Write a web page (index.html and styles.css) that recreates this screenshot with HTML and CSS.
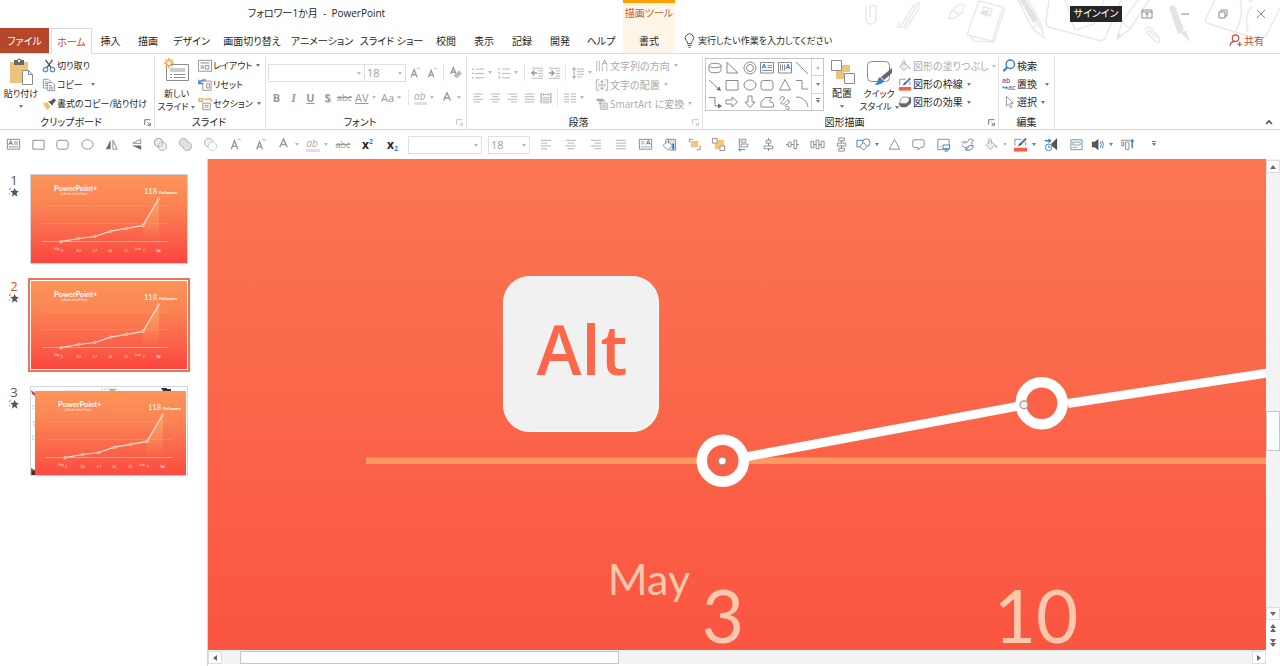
FILE: index.html
```html
<!DOCTYPE html>
<html lang="ja">
<head>
<meta charset="utf-8">
<title>フォロワー1か月 - PowerPoint</title>
<link rel="stylesheet" href="styles.css">
</head>
<body>
<svg class="sprite" aria-hidden="true">
  <defs>
    <linearGradient id="slideFill" x1="0" y1="0" x2="0" y2="1"><stop offset="0" stop-color="#fd9459"/><stop offset=".3" stop-color="#fb8654"/><stop offset=".75" stop-color="#fa5f48"/><stop offset="1" stop-color="#fa453e"/></linearGradient>
    <linearGradient id="areaFill" x1="0" y1="0" x2="0" y2="1"><stop offset="0" stop-color="#fdb66c" stop-opacity=".8"/><stop offset="1" stop-color="#fdb66c" stop-opacity="0"/></linearGradient>
  </defs>
  <symbol id="textbox" viewBox="0 0 16 16"><path class="ln" d="M1.5 2.500h13v10.500h-13zM8.500 5.500h4.500M8.500 7.500h4.500M3 10.500h10"/><path class="bl" d="M3 8.500l2-4.500 2 4.500M4 7h2.500"/></symbol>
  <symbol id="vtextbox" viewBox="0 0 16 16"><path class="ln" d="M1.500 2.500h13v10.500h-13zM3.500 4.500v6M5.500 4.500v6M7.500 4.500v6"/><path class="bl" d="M9 9l2-5 2 5M9.700 7.500h2.600"/></symbol>
  <symbol id="phbox" viewBox="0 0 16 16"><path class="ln" d="M1.500 2.500h13v10.500h-13z"/><path fill="#ccc" d="M3 4h4v4H3zM3 9.500h10v2H3z"/><path class="bl" d="M9 8l2-4.500L13 8M9.500 6.700h3"/></symbol>
  <symbol id="rect" viewBox="0 0 16 16"><path class="ln" d="M2 3.500h12v9.500H2z"/></symbol>
  <symbol id="rrect" viewBox="0 0 16 16"><rect class="ln" x="2" y="3.500" width="12" height="9.500" rx="2.500"/></symbol>
  <symbol id="oval" viewBox="0 0 16 16"><ellipse class="ln" cx="8" cy="8" rx="6" ry="5"/></symbol>
  <symbol id="tri" viewBox="0 0 16 16"><path class="ln" d="M8 2.500L13.500 13h-11z"/></symbol>
  <symbol id="cyl" viewBox="0 0 16 16"><path class="ln" d="M2 5.500v5c0 3 12 3 12 0v-5"/><ellipse class="ln" cx="8" cy="5.500" rx="6" ry="2.200"/></symbol>
  <symbol id="rtri" viewBox="0 0 16 16"><path class="ln" d="M3 2.500V13h11z"/></symbol>
  <symbol id="donut" viewBox="0 0 16 16"><circle class="ln" cx="8" cy="8" r="6"/><circle class="ln" cx="8" cy="8" r="3.500"/></symbol>
  <symbol id="line" viewBox="0 0 16 16"><path class="ln" d="M2 2l12 12"/></symbol>
  <symbol id="arrow" viewBox="0 0 16 16"><path class="ln" d="M2 3l11 10"/><path class="dk" d="M14 14l-4.500-1.200 3-3.200z"/></symbol>
  <symbol id="elbow" viewBox="0 0 16 16"><path class="ln" d="M2 3.500h6V12h6"/></symbol>
  <symbol id="elbowarrow" viewBox="0 0 16 16"><path class="ln" d="M2 3.500h6V12h4"/><path class="dk" d="M11 9.500l4 2.500-4 2.500z"/></symbol>
  <symbol id="rarrow" viewBox="0 0 16 16"><path class="ln" d="M2 6h6V3l5.500 5L8 13v-3H2z"/></symbol>
  <symbol id="darrow" viewBox="0 0 16 16"><path class="ln" d="M6 2v6H3l5 5.500L13 8h-3V2z"/></symbol>
  <symbol id="poly" viewBox="0 0 16 16"><path class="ln" d="M6 3.500h7q-4 4-1 5 3-1 2.500 4.500H2V8z"/></symbol>
  <symbol id="scribble" viewBox="0 0 16 16"><path class="ln" d="M3 6c0-5 6-4 4-1s-5 4-2 5 6-7 7-3-5 3-4 5 4-1 4 2-3 1-3 0"/></symbol>
  <symbol id="arc" viewBox="0 0 16 16"><path class="ln" d="M2 3c7 0 11 4 12 10"/></symbol>
  <symbol id="fliph" viewBox="0 0 16 16"><path class="dk" d="M7 3v10H2z"/><path class="ln" d="M9.500 3.500v9.500h4.500z"/></symbol>
  <symbol id="flipv" viewBox="0 0 16 16"><path class="ln" d="M12.500 7L4 6.500l8.500-4z"/><path class="dk" d="M3 9h10v4.500z"/></symbol>
  <symbol id="union" viewBox="0 0 16 16"><circle class="gr" fill="#f1ebef" cx="6" cy="6" r="4.500"/><circle class="gr" fill="#f1ebef" cx="10" cy="10" r="4.500"/><circle class="gr" cx="6" cy="6" r="4.500"/></symbol>
  <symbol id="merge" viewBox="0 0 16 16"><path class="gr" fill="#e6dde3" d="M6 1.500a4.500 4.500 0 0 1 4.500 4 4.500 4.500 0 1 1-5 5A4.500 4.500 0 0 1 6 1.500z"/></symbol>
  <symbol id="subtract" viewBox="0 0 16 16"><circle class="gr" fill="#f4eff2" cx="6" cy="6" r="4.500"/><circle class="gr" cx="10" cy="10" r="4.500" fill="#fff" stroke-dasharray="1.500 1"/></symbol>
  <symbol id="grow" viewBox="0 0 16 16"><path class="gd w2" d="M3.500 13L7 4l3.500 9M4.800 10h4.400"/><path class="gd" d="M10.500 3.500L12 2l1.500 1.500"/></symbol>
  <symbol id="shrink" viewBox="0 0 16 16"><path class="gd w2" d="M4 13l3-8 3 8M5 10.500h4"/><path class="gd" d="M10.500 2L12 3.500 13.500 2"/></symbol>
  <symbol id="fontcolor" viewBox="0 0 16 16"><path class="gd w2" d="M4 11L8 2l4 9M5.500 8h5"/></symbol>
  <symbol id="clear" viewBox="0 0 16 16"><path class="gd w2" d="M2 9l3-7 3 7M3 7h4"/><path fill="#bbb" d="M11.500 5l3.500 3.500-6 5.500L5 11z"/></symbol>
  <symbol id="bullets" viewBox="0 0 16 16"><path class="gr" d="M5 3.500h10M5 8.500h10M5 13.500h10"/><path class="gr w2" d="M1 3.500h2M1 8.500h2M1 13.500h2"/></symbol>
  <symbol id="numbers" viewBox="0 0 16 16"><path class="gr" d="M6 3.500h9M6 8.500h9M6 13.500h9M1.500 2.500h1V5M1.500 7.500h1.500V10M1.500 12.500h1.500V15"/></symbol>
  <symbol id="outdent" viewBox="0 0 16 16"><path class="gr" d="M2 2.500h13M9 5.500h6M9 8.500h6M9 11.500h6M2 14h13"/><path class="gd w2" d="M2 8h6M5 5L2 8l3 3"/></symbol>
  <symbol id="indent" viewBox="0 0 16 16"><path class="gr" d="M2 2.500h13M10 5.500h5M10 8.500h5M10 11.500h5M2 14h13"/><path class="gd w2" d="M2 8h6M5 5l3 3-3 3"/></symbol>
  <symbol id="spacing" viewBox="0 0 16 16"><path class="gr" d="M7 3.500h8M7 6.500h8M7 9.500h8M7 12.500h6"/><path class="gd" d="M3.500 2v12M1.500 4.500l2-2.500 2 2.500M1.500 11.500l2 2.500 2-2.500"/></symbol>
  <symbol id="left" viewBox="0 0 16 16"><path class="gr" d="M3 3.500h11M3 6.500h7M3 9.500h11M3 12.500h7"/></symbol>
  <symbol id="center" viewBox="0 0 16 16"><path class="gr" d="M3 3.500h11M5 6.500h7M3 9.500h11M5 12.500h7"/></symbol>
  <symbol id="right" viewBox="0 0 16 16"><path class="gr" d="M3 3.500h11M7 6.500h7M3 9.500h11M7 12.500h7"/></symbol>
  <symbol id="justify" viewBox="0 0 16 16"><path class="gr" d="M3 3.500h11M3 6.500h11M3 9.500h11M3 12.500h11"/></symbol>
  <symbol id="distribute" viewBox="0 0 16 16"><path class="gr w2" d="M2.500 2v12M13.500 2v12"/><path class="gr" d="M4 4h8M6 2.500L4 4l2 1.500M10 2.500L12 4l-2 1.500M4 7.500h8M4 9.500h8M4 11.500h8M4 13.500h8"/></symbol>
  <symbol id="columns" viewBox="0 0 16 16"><path class="gr" d="M1 3.500h6M9 3.500h6M1 6.500h6M9 6.500h6M1 9.500h6M9 9.500h6M1 12.500h6M9 12.500h6"/></symbol>
  <symbol id="direction" viewBox="0 0 16 16"><path class="gr" d="M2 2v12M5 2v12M8.500 8v6M13.500 8v6"/><path class="gd" d="M8 7l3-6 3 6M9.500 5h3"/></symbol>
  <symbol id="valign" viewBox="0 0 16 16"><path class="gr" fill="#f7f1f5" d="M5 2H1.500v12H5M11 2h3.500v12H11"/><path class="gd" d="M8 3v4M6 5l2-2 2 2M8 9v4M6 11l2 2 2-2M4 8h8"/></symbol>
  <symbol id="smartart" viewBox="0 0 16 16"><path fill="#aaa" d="M1 2h8l3 3H6l2 3H4l2-3H3z"/><path class="gr" fill="#efe5ec" d="M6 7h8v7H6zM8 9.500h4M8 11.500h4"/></symbol>
  <symbol id="fill" viewBox="0 0 16 16"><path class="gr" fill="#f1eaee" d="M7 4l5 4.500-5 5-5-5z"/><path class="gr" d="M5 7V2.500q2-2 3 0V7"/><path fill="#bba9b6" d="M12 8q3 2 1.500 4-2-1-1.500-4z"/></symbol>
  <symbol id="outline" viewBox="0 0 16 16"><path class="ln" d="M9 2.500H2V9M13.500 5v4"/><path stroke="#3d7fc1" stroke-width="2.200" d="M14 1.500L7 8.500"/><path fill="#444" d="M7.500 6.500L5 10l4-2z"/><path fill="#fb5a42" d="M1 11.500h14v4H1z"/></symbol>
  <symbol id="effects" viewBox="0 0 16 16"><path fill="#666" d="M13 2l2 1v5q0 2-2 3l-4 3H4l-3-3V9l7 1 3-2z"/><path class="ln" fill="#fff" d="M6 2.500h5q2 0 2 2l-1 3q-1 2-3 2H4q-3 0-2-2l1.500-3Q4.500 2.500 6 2.500z"/></symbol>
  <symbol id="search" viewBox="0 0 16 16"><circle cx="9.500" cy="6" r="4.800" fill="none" stroke="#3d7fc1" stroke-width="1.600"/><path stroke="#3d7fc1" stroke-width="2.500" d="M6 9.500L1.500 14"/></symbol>
  <symbol id="cursor" viewBox="0 0 16 16"><path class="ln" fill="#fff" d="M5 1.500v11l2.500-2 2 4 2-1-2-4H13z"/></symbol>
  <symbol id="cut" viewBox="0 0 16 16"><path stroke="#555" stroke-width="1.600" d="M4 1l6.500 9M12 1L5.500 10"/><g fill="none" stroke="#5b93cd" stroke-width="1.500"><circle cx="4" cy="12" r="2.500"/><circle cx="12" cy="12" r="2.500"/></g></symbol>
  <symbol id="copy" viewBox="0 0 16 16"><path class="ln" fill="#fff" d="M1.500 1.500h6l2 2v8h-8z"/><path class="ln" fill="#fff" d="M6.500 5h5l3 3v6.500h-8z"/><path stroke="#5b93cd" d="M3 4.500h3M3 6.500h3M3 8.500h3M8 8.500h3M8 10.500h5M8 12.500h5"/></symbol>
  <symbol id="painter" viewBox="0 0 16 16"><path fill="#eec274" d="M1 7l5-1 4 5-4 4z"/><path fill="#555" d="M7 5l5 5 1-3 3-3-2.500-2.500L11 4z"/></symbol>
  <symbol id="layout" viewBox="0 0 16 16"><path class="ln" d="M.5 1.500h15v12.500H.5z"/><path fill="#bbb" d="M3 3.500h10v2H3zM3 7h4v4.500H3z"/><path class="ln" d="M8.500 7.500h4v4h-4z"/></symbol>
  <symbol id="reset" viewBox="0 0 16 16"><path class="ln" fill="#fff" d="M5.500 3.500h9.500v10.500H5.500zM10 6.500h3v5h-3z"/><path class="bl w2" d="M2 6q1-5 7-3.500M1 2v4.500h4.500"/></symbol>
  <symbol id="section" viewBox="0 0 16 16"><path fill="none" stroke="#f09a54" stroke-width="1.300" d="M1 2h4v3H1zM7 2.500h8v3"/><path class="ln" fill="#fff" d="M5.500 7h8.500v7.500H5.500zM7.500 9.500h4.500M7.500 11.500h4.500"/></symbol>
  <symbol id="paint" viewBox="0 0 16 16"><path class="ln" fill="#d7e6f5" d="M6 2.500h8.500v11.500H8"/><path stroke="#2f74b5" stroke-width="2" d="M12 7v6"/><path class="ln" fill="#fff" d="M6 4.500l5 4.500-5 5-5-5z"/><path class="ln" d="M4 7V3q1.500-2 3 0v4"/></symbol>
  <symbol id="front" viewBox="0 0 16 16"><path fill="#f1c77d" d="M4 4h8v7H4z"/><path class="ln" d="M6 2.500H2.500V6M10.500 13.500h3.500V9"/></symbol>
  <symbol id="arrange" viewBox="0 0 16 16"><path fill="#f1c77d" d="M7 3h7v6H9v4H4V7h3z"/><path class="ln" fill="#fff" d="M1.500 1.500h5v5h-5zM9.500 9.500h5v5h-5z"/></symbol>
  <symbol id="alignl" viewBox="0 0 16 16"><path class="ln" d="M3.500 1v11M5.500 2.500h5v3h-5zM5.500 7.500h7v3h-7z"/><path class="bl" d="M3 13.500h7M5 11.500l-2 2 2 2"/></symbol>
  <symbol id="alignc" viewBox="0 0 16 16"><path class="ln" fill="#fff" d="M8 1v2.500M8 6.500v3M8 12.500V15M5.500 3.500h5v3h-5zM3.500 9.500h9v3h-9z"/></symbol>
  <symbol id="alignm" viewBox="0 0 16 16"><path class="ln" fill="#fff" d="M1 8h2.500M6.500 8h3M12.500 8H15M3.500 5.500h3v5h-3zM9.500 3.500h3v9h-3z"/></symbol>
  <symbol id="disth" viewBox="0 0 16 16"><path class="ln" fill="#fff" d="M1 4.500h3v7H1zM6.500 3.500h3v9h-3zM12 4.500h3v7h-3zM4 8h2.500M9.500 8H12"/></symbol>
  <symbol id="distv" viewBox="0 0 16 16"><path class="ln" fill="#fff" d="M5 1h6v3H5zM3.500 6.500h9v3h-9zM5 12h6v3H5zM8 4v2.500M8 9.500V12"/></symbol>
  <symbol id="shapes" viewBox="0 0 16 16"><path class="bl" d="M1 3.500h8v7H1z"/><circle class="bl" fill="#fff" cx="11" cy="6" r="4"/><path class="bl" fill="#fff" d="M8 6l4 4-4 4-4-4z"/></symbol>
  <symbol id="callout" viewBox="0 0 16 16"><path class="ln" d="M3 3h10q1 0 1 1v6q0 1-1 1h-3l-2.500 3V11H3q-1 0-1-1V4q0-1 1-1z"/></symbol>
  <symbol id="screen" viewBox="0 0 16 16"><path class="ln" d="M2 2.500h12v11H2z"/><path class="bl" fill="#fff" d="M7.500 8.500h7v4h-7zM11 12.500v2M9 15h4M5 10v1"/></symbol>
  <symbol id="bird" viewBox="0 0 16 16"><path class="ln" d="M1.500 5q3 3 7 0 0-3 3-3l3 1.500-2 1.500v3M2 8q1 4 5 3M4 4l3 2"/><path class="bl" fill="#fff" d="M6 14q0-5 8-5 0 6-8 5l3-3"/></symbol>
  <symbol id="anim" viewBox="0 0 16 16"><path fill="#555" d="M8 7l6-6v13L8 9z"/><path class="bl w2" d="M1 4h6M5 2l2 2-2 2"/><circle class="bl" fill="#fff" cx="5" cy="11" r="3.500"/><path class="bl" d="M5 9v2h2"/></symbol>
  <symbol id="slideview" viewBox="0 0 16 16"><path class="ln" d="M2 3h12v10.500H2z"/><path class="bl" d="M4 5.500h8v3H4zM4 11h5" opacity=".7"/></symbol>
  <symbol id="sound" viewBox="0 0 16 16"><path fill="#555" d="M2 5h3l4-3v12l-4-3H2z"/><path class="bl" d="M11 5q2 3 0 6M13 4q2.500 4 0 8"/></symbol>
  <symbol id="top" viewBox="0 0 16 16"><path class="ln" d="M1 3.500h10M2 5.500h2v4H2zM6 5.500h3.500v8H6z"/><path class="bl w2" d="M13 3v9M11.500 5L13 3l1.500 2"/></symbol>
  <symbol id="launcher" viewBox="0 0 16 16"><path class="gd w2" d="M3 12V3h10M8 8l4 4M13 8v5H8"/></symbol>
  <symbol id="star" viewBox="0 0 16 16"><path fill="#555" d="M9 1l2 5 5 .5-4 3.500 1.500 5.500L9 12.500 4.500 15.500 6 10 2 6.500 7 6z"/><path stroke="#777" stroke-width="1.500" d="M0 4h2M2 1v2M0 11h2"/></symbol>

  <symbol id="chart" viewBox="0 0 156 88">
    <rect width="156" height="88" fill="url(#slideFill)"/>
    <path stroke="#fdb482" stroke-width=".7" opacity=".45" d="M11 31h126M11 48.500h126"/>
    <path stroke="#fdb482" stroke-width=".9" d="M11 66.500h126"/>
    <path fill="url(#areaFill)" opacity=".8" d="M112 51L128 24V66h-16z"/>
    <path fill="none" stroke="#fde3d6" stroke-width="1.200" d="M30 66.700l17.500-3.200 16.500-2 15.500-5.300 16-2.800 16.500-3L127.500 24"/>
    <g fill="#fa7a50" stroke="#fff" stroke-width=".7"><circle cx="30" cy="66.700" r="1.200"/><circle cx="47.500" cy="63.500" r="1.200"/><circle cx="64" cy="61.500" r="1.200"/><circle cx="79.500" cy="56.200" r="1.200"/><circle cx="95.500" cy="53.400" r="1.200"/><circle cx="112" cy="50.400" r="1.200"/><circle cx="127.500" cy="24" r="1.200"/></g>
    <g class="thumbtext"><text x="23" y="16" font-size="7.500" font-weight="700">PowerPoint+</text><text x="29.500" y="20" font-size="3.500" opacity=".75">@AnimationPoint</text><text x="113" y="19" font-size="7.500">118</text><text x="128" y="19" font-size="4.200" font-weight="700">Followers</text>
    <g font-size="4" opacity=".8"><text x="23" y="74.500" font-size="3">May</text><text x="29.500" y="76.500">3</text><text x="45" y="76.500">10</text><text x="61.500" y="76.500">17</text><text x="77" y="76.500">24</text><text x="93" y="76.500">31</text><text x="104" y="74.500" font-size="3">June</text><text x="111.500" y="76.500">7</text></g><text x="125" y="76.500" font-size="4" font-weight="700">14</text></g>
  </symbol>
</svg>

<div class="app">
  <header class="top">
    <svg class="doodles" viewBox="860 0 420 46" aria-hidden="true">
      <g fill="none" stroke="#e9e9e9" stroke-width="1.500">
        <path d="M866 6v12q0 6 5 6t5-6V7q-4-3-6 0v10M900 27l13-21 6-3-1 7-12 18zM904 26l12-19M899 22l-2 6M950 13l9-9 5 1-2 8-9 6-4-1zM953 11l7 4"/>
        <path d="M979 1l24 6-11 34-25-6zM970 36l4 5 20 1 11-34M984 7l8 2-2 7-8-2z"/>
        <path d="M1018 0l14 28 12 10-3-14-14-26M1032 28l9-5M1049 0l-3 22q0 5 6 6l46 12q6 2 8-4l15-36M1104 0l-10 24-19 6-10-30M1020 0l23 31"/>
        <path d="M1138 0l-16 22-5 17 13-10L1149 0M1122 22l8 7"/>
        <path d="M1145 29q4-4 7 0l7 9q2 5-3 4l-9-9q0-4 4-1l5 6"/>
        <path d="M1215 0l-9 18q-1 5 4 6l44 14q9 4 13-4l13-26M1240 0q4 15-4 31M1252 6q-8 8-4 26M1248 2l12-5"/>
      </g>
      <path fill="#e3e3e3" d="M981 11l8-1-1 5-8-1zM1020 0h6l12 20-5 3zM1169 8q1-4 6-2l9 24-6 4zM1180 32l6-1 4 11zM1117 39l1-6 4 3z"/>
    </svg>
    <div class="titlebar">
      <h1 class="doctitle">フォロワー1か月&nbsp; -&nbsp; PowerPoint</h1>
      <div class="context">描画ツール</div>
      <div class="window">
        <button class="signin">サインイン</button>
        <button aria-label="リボンの表示オプション"><svg viewBox="0 0 12 12"><path class="ln" d="M1 2h10v8H1zM1 4h10M6 9V5M4.500 6.500L6 5l1.500 1.500"/></svg></button>
        <button aria-label="最小化"><svg viewBox="0 0 12 12"><path class="ln" d="M2 6h8"/></svg></button>
        <button aria-label="元に戻す"><svg viewBox="0 0 12 12"><path class="ln" d="M2 4h6v6H2zM4 4V2h6v6H8"/></svg></button>
        <button aria-label="閉じる"><svg viewBox="0 0 12 12"><path class="ln" d="M2 2l8 8M10 2l-8 8"/></svg></button>
      </div>
    </div>
    <div class="tabrow">
      <nav class="tabs">
        <a href="#" class="file">ファイル</a><a href="#" class="active">ホーム</a><a href="#">挿入</a><a href="#">描画</a><a href="#">デザイン</a><a href="#">画面切り替え</a><a href="#">アニメーション</a><a href="#">スライド ショー</a><a href="#">校閲</a><a href="#">表示</a><a href="#">記録</a><a href="#">開発</a><a href="#">ヘルプ</a><a href="#" class="format">書式</a>
      </nav>
      <button class="tell"><svg viewBox="0 0 12 16"><path fill="none" stroke="#444" d="M4 11.500q0-2-1.500-3.500a4.500 4.500 0 1 1 7 0Q8 9.500 8 11.500zM4 13.500h4M5 15.500h2"/></svg>実行したい作業を入力してください</button>
      <button class="share"><svg viewBox="0 0 14 14"><g fill="none" stroke="#c2492d" stroke-width="1.200"><circle cx="7" cy="4.500" r="3.500"/><path d="M1 13q1-5 5-5M9 11h5M11.500 8.500v5"/></g></svg>共有</button>
    </div>
  </header>

  <section class="ribbon" aria-label="ホーム">
    <div class="group clip">
      <div class="content">
        <button class="big"><svg viewBox="0 0 26 28"><path fill="#edc27a" d="M2 4h18v21H2z"/><path fill="#666" d="M6 2h3q2-3 4 0h3v5H6z"/><path fill="#fff" d="M10 2h2v2h-2z"/><path class="ln" fill="#fff" d="M14.500 12.500h6l4 4v10h-10z"/><path class="ln" d="M20.500 12.500v4h4"/></svg>貼り付け<i class="car"></i></button>
        <div class="list">
          <button><svg><use href="#cut"/></svg>切り取り</button>
          <button><svg><use href="#copy"/></svg>コピー<i class="car far"></i></button>
          <button><svg><use href="#painter"/></svg>書式のコピー/貼り付け</button>
        </div>
      </div>
      <div class="caption">クリップボード<svg class="launch dark"><use href="#launcher"/></svg></div>
    </div>
    <div class="group slides">
      <div class="content">
        <button class="big"><svg viewBox="0 0 26 28"><path class="ln" fill="#fff" d="M2.500 6.500h22v16h-22z"/><path fill="#ccc" d="M6 10h15v4H6z"/><path class="ln" d="M6 16.500h2M10 16.500h11M6 19.500h2M10 19.500h11"/><path stroke="#e9aa45" stroke-width="1.600" d="M5 0v10M0 5h10M1.500 1.500l7 7M8.500 1.500l-7 7"/><circle cx="5" cy="5" r="2.300" fill="#fff" stroke="#e9aa45"/></svg>新しい<span>スライド<i class="car"></i></span></button>
        <div class="list">
          <button><svg><use href="#layout"/></svg>レイアウト<i class="car"></i></button>
          <button><svg><use href="#reset"/></svg>リセット</button>
          <button><svg><use href="#section"/></svg>セクション<i class="car"></i></button>
        </div>
      </div>
      <div class="caption">スライド</div>
    </div>
    <div class="group font">
      <div class="content rows">
        <div class="tools">
          <label class="combo wide"><select aria-label="フォント"><option></option></select><i class="car"></i></label><label class="combo size"><select aria-label="フォント サイズ"><option>18</option></select><i class="car"></i></label>
          <button class="t" aria-label="拡大"><svg><use href="#grow"/></svg></button><button class="t" aria-label="縮小"><svg><use href="#shrink"/></svg></button><i class="sep"></i><button class="t" aria-label="書式のクリア"><svg><use href="#clear"/></svg></button>
        </div>
        <div class="tools">
          <button class="t"><b>B</b></button><button class="t"><em>I</em></button><button class="t"><b><u>U</u></b></button><button class="t"><b class="shade">S</b></button><button class="t small"><s>abc</s></button>
          <button class="split under">AV<i class="car"></i></button><button class="split">Aa<i class="car"></i></button><i class="sep"></i><button class="split mark"><span>ab</span><i class="car"></i></button><button class="split" aria-label="フォントの色"><svg><use href="#fontcolor"/></svg><i class="car"></i></button>
        </div>
      </div>
      <div class="caption">フォント<svg class="launch"><use href="#launcher"/></svg></div>
    </div>
    <div class="group para">
      <div class="content">
        <div class="rows">
          <div class="tools">
            <button class="split" aria-label="箇条書き"><svg><use href="#bullets"/></svg><i class="car"></i></button><button class="split" aria-label="段落番号"><svg><use href="#numbers"/></svg><i class="car"></i></button><i class="sep"></i><button class="t" aria-label="インデントを減らす"><svg><use href="#outdent"/></svg></button><button class="t" aria-label="インデントを増やす"><svg><use href="#indent"/></svg></button><i class="sep"></i><button class="split" aria-label="行間"><svg><use href="#spacing"/></svg><i class="car"></i></button>
          </div>
          <div class="tools">
            <button class="t" aria-label="左揃え"><svg><use href="#left"/></svg></button><button class="t" aria-label="中央揃え"><svg><use href="#center"/></svg></button><button class="t" aria-label="右揃え"><svg><use href="#right"/></svg></button><button class="t" aria-label="両端揃え"><svg><use href="#justify"/></svg></button><button class="t" aria-label="均等割り付け"><svg><use href="#distribute"/></svg></button><i class="sep"></i><button class="split" aria-label="段組み"><svg><use href="#columns"/></svg><i class="car"></i></button>
          </div>
        </div>
        <div class="list off">
          <button><svg><use href="#direction"/></svg>文字列の方向<i class="car"></i></button>
          <button><svg><use href="#valign"/></svg>文字の配置<i class="car"></i></button>
          <button><svg><use href="#smartart"/></svg>SmartArt に変換<i class="car"></i></button>
        </div>
      </div>
      <div class="caption">段落<svg class="launch"><use href="#launcher"/></svg></div>
    </div>
    <div class="group draw">
      <div class="content">
        <div class="gallery">
          <div class="shapes"><svg><use href="#cyl"/></svg><svg><use href="#rtri"/></svg><svg><use href="#donut"/></svg><svg><use href="#textbox"/></svg><svg><use href="#vtextbox"/></svg><svg><use href="#line"/></svg><svg><use href="#arrow"/></svg><svg><use href="#rect"/></svg><svg><use href="#oval"/></svg><svg><use href="#rrect"/></svg><svg><use href="#tri"/></svg><svg><use href="#elbow"/></svg><svg><use href="#elbowarrow"/></svg><svg><use href="#rarrow"/></svg><svg><use href="#darrow"/></svg><svg><use href="#poly"/></svg><svg><use href="#scribble"/></svg><svg><use href="#arc"/></svg></div>
          <div class="more"><button aria-label="上へ"><i class="car up"></i></button><button aria-label="下へ"><i class="car"></i></button><button aria-label="その他"><i class="car bar"></i></button></div>
        </div>
        <button class="big arrangebtn"><svg viewBox="0 0 26 28"><path fill="#edc27a" d="M13 7h8v7h-8zM7 13h8v8H7z"/><path class="ln" fill="#fff" d="M2.500 2.500h10v10h-10zM15.500 15.500h10v10h-10z"/></svg>配置<i class="car"></i></button>
        <button class="big quick"><svg viewBox="0 0 26 28"><rect class="ln" x="1.500" y="3.500" width="22" height="20" rx="4" fill="#fff"/><path fill="#666" d="M26 10v5l-8 7-3-3z"/><path fill="#3d7fc1" d="M14 19l4 4q-2 4-10 4 4-2 4-6z"/></svg>クイック<span>スタイル<i class="car"></i></span></button>
        <div class="list">
          <button class="dis"><svg><use href="#fill"/></svg>図形の塗りつぶし<i class="car"></i></button>
          <button><svg><use href="#outline"/></svg>図形の枠線<i class="car"></i></button>
          <button><svg><use href="#effects"/></svg>図形の効果<i class="car"></i></button>
        </div>
      </div>
      <div class="caption">図形描画<svg class="launch dark"><use href="#launcher"/></svg></div>
    </div>
    <div class="group edit">
      <div class="content">
        <div class="list">
          <button><svg><use href="#search"/></svg>検索</button>
          <button><span class="replace"><b>ab</b><b>↪ac</b></span>置換<i class="car far"></i></button>
          <button><svg><use href="#cursor"/></svg>選択<i class="car"></i></button>
        </div>
      </div>
      <div class="caption">編集</div>
    </div>
    <button class="collapse" aria-label="リボンを折りたたむ"><svg viewBox="0 0 10 8"><path fill="none" stroke="#555" stroke-width="1.600" d="M2 6l3-3 3 3"/></svg></button>
  </section>

  <div class="quickbar" role="toolbar" aria-label="クイック アクセス">
    <button aria-label="テキスト ボックス"><svg><use href="#textbox"/></svg></button>
    <button aria-label="四角形"><svg><use href="#rect"/></svg></button>
    <button aria-label="角丸四角形"><svg><use href="#rrect"/></svg></button>
    <button aria-label="楕円"><svg><use href="#oval"/></svg></button>
    <button aria-label="左右反転"><svg><use href="#fliph"/></svg></button>
    <button aria-label="上下反転"><svg><use href="#flipv"/></svg></button>
    <button aria-label="型抜き"><svg><use href="#union"/></svg></button>
    <button aria-label="接合"><svg><use href="#merge"/></svg></button>
    <button aria-label="単純型抜き"><svg><use href="#subtract"/></svg></button>
    <button aria-label="文字拡大"><svg><use href="#grow"/></svg></button>
    <button aria-label="文字縮小"><svg><use href="#shrink"/></svg></button>
    <button aria-label="文字色"><svg><use href="#fontcolor"/></svg><i class="car lite"></i></button>
    <button class="mark"><span>ab</span><i class="car lite"></i></button>
    <button class="small"><s>abc</s></button>
    <button class="script">x<sup>2</sup></button>
    <button class="script">x<sub>2</sub></button>
    <label class="combo"><select aria-label="フォント名"><option></option></select><i class="car"></i></label>
    <label class="combo"><select aria-label="サイズ"><option>18</option></select><i class="car"></i></label>
    <button aria-label="左"><svg><use href="#left"/></svg></button>
    <button aria-label="中央"><svg><use href="#center"/></svg></button>
    <button aria-label="右"><svg><use href="#right"/></svg></button>
    <button aria-label="両端"><svg><use href="#justify"/></svg></button>
    <button aria-label="プレースホルダー"><svg><use href="#phbox"/></svg></button>
    <button aria-label="背景の書式"><svg><use href="#paint"/></svg></button>
    <button aria-label="前面へ"><svg><use href="#front"/></svg></button>
    <button aria-label="背面へ"><svg><use href="#arrange"/></svg></button>
    <button aria-label="左に揃える"><svg><use href="#alignl"/></svg></button>
    <button aria-label="左右中央"><svg><use href="#alignc"/></svg></button>
    <button aria-label="上下中央"><svg><use href="#alignm"/></svg></button>
    <button aria-label="左右に整列"><svg><use href="#disth"/></svg></button>
    <button aria-label="上下に整列"><svg><use href="#distv"/></svg></button>
    <button aria-label="図形"><svg><use href="#shapes"/></svg><i class="car"></i></button>
    <button aria-label="三角形"><svg><use href="#tri"/></svg></button>
    <button aria-label="吹き出し"><svg><use href="#callout"/></svg></button>
    <button aria-label="画像"><svg><use href="#screen"/></svg></button>
    <button aria-label="アイコン"><svg><use href="#bird"/></svg></button>
    <button aria-label="塗りつぶし"><svg><use href="#fill"/></svg><i class="car lite"></i></button>
    <button aria-label="枠線"><svg><use href="#outline"/></svg><i class="car"></i></button>
    <button aria-label="アニメーション"><svg><use href="#anim"/></svg></button>
    <button aria-label="スライド表示"><svg><use href="#slideview"/></svg></button>
    <button aria-label="オーディオ"><svg><use href="#sound"/></svg><i class="car"></i></button>
    <button aria-label="上揃え"><svg><use href="#top"/></svg></button>
    <button aria-label="カスタマイズ"><i class="car bar"></i></button>
  </div>

  <main class="work">
    <aside class="thumbs">
      <div class="item"><div class="num">1<svg><use href="#star"/></svg></div><div class="frame"><svg viewBox="0 0 156 88"><use href="#chart"/></svg></div></div>
      <div class="item current"><div class="num">2<svg><use href="#star"/></svg></div><div class="frame"><svg viewBox="0 0 156 88"><use href="#chart"/></svg></div></div>
      <div class="item"><div class="num">3<svg><use href="#star"/></svg></div><div class="frame"><svg viewBox="0 0 156 88"><rect width="156" height="88" fill="#fff"/><path fill="#b84a36" d="M0 3l4 3v3L1 7zM0 81l4 2v5H0z"/><path fill="#333" d="M130 1h6v1h4v2h-8zM1 84h3v4H1z"/><path fill="#e9a660" d="M78 2h8l-3 2h-4z"/><path stroke="#999" stroke-width=".6" d="M33 4h16M70 2h16M2 18v4M3 34v6M2 48v5" stroke-dasharray="2 1"/><svg x="4" y="4" width="151" height="84" viewBox="0 0 151 84"><use href="#chart" width="156" height="88"/></svg></svg></div></div>
    </aside>
    <div class="stagewrap">
      <svg class="stage" viewBox="208 159 1058 491" preserveAspectRatio="xMinYMin slice">
        <defs><linearGradient id="stageFill" x1="0" y1="0" x2="0" y2="1"><stop offset="0" stop-color="#fb7751"/><stop offset="1" stop-color="#fa5541"/></linearGradient></defs>
        <rect x="208" y="159" width="1058" height="491" fill="url(#stageFill)"/>
        <path stroke="#fb9964" stroke-width="6.500" d="M366 460.700h900"/>
        <path stroke="#fff" stroke-width="9" d="M740 458l282-52.500M1068 403.500L1268 373"/>
        <g fill="#fa6248" stroke="#fff" stroke-width="10.500"><circle cx="722.800" cy="460.700" r="21"/><circle cx="1041.700" cy="403.300" r="21"/></g>
        <g stroke="#999" stroke-width="1.200"><circle cx="722.300" cy="461" r="3.800" fill="#fff"/><circle cx="1024" cy="404.800" r="4" fill="#fce9e5"/></g>
        <rect x="503.500" y="276.500" width="155" height="155" rx="26" fill="#f1f1f1" stroke="#fff"/>
        <text class="alt" x="582" y="375" text-anchor="middle">Alt</text>
        <g class="axis" text-anchor="middle"><text x="649" y="595" font-size="43">May</text><text x="723" y="643" font-size="73">3</text><text x="1036" y="643" font-size="73">10</text></g>
      </svg>
      <div class="vscroll"><button aria-label="上にスクロール"><i class="tri up"></i></button><div class="track"><div class="thumb"></div></div><button aria-label="下にスクロール"><i class="tri"></i></button><button class="plain" aria-label="前のスライド"><i class="tri up"></i><i class="tri up"></i></button><button class="plain" aria-label="次のスライド"><i class="tri"></i><i class="tri"></i></button></div>
      <div class="hscroll"><button aria-label="左にスクロール"><i class="tri lt"></i></button><div class="track"><div class="thumb"></div></div><button aria-label="右にスクロール"><i class="tri rt"></i></button></div>
    </div>
  </main>
</div>
</body>
</html>
```
FILE: styles.css
```css
* { box-sizing: border-box; }
body {
  margin: 0;
  background: #fff;
  color: #262626;
  font: 10px/14px "Open Sans", "Noto Sans CJK JP", sans-serif;
  font-feature-settings: "palt";
}
button, select {
  font: inherit;
  font-feature-settings: inherit;
  color: inherit;
  background: none;
  border: 0;
  padding: 0;
  margin: 0;
  white-space: nowrap;
}
a { color: inherit; text-decoration: none; white-space: nowrap; }
svg { display: block; flex: none; }
.sprite { position: absolute; width: 0; height: 0; }
.ln { stroke: #8a8a8a; stroke-width: 1; }
.ln:not([fill]) { fill: none; }
.bl { stroke: #3d7fc1; stroke-width: 1; }
.bl:not([fill]) { fill: none; }
.gr { stroke: #b0b0b0; stroke-width: 1; }
.gr:not([fill]) { fill: none; }
.gd { stroke: #999; stroke-width: 1; }
.gd:not([fill]) { fill: none; }
.w2 { stroke-width: 1.5; }
.dk { fill: #6a6a6a; }
.thumbtext { fill: #fff; font-family: Lato, sans-serif; }

.car {
  display: inline-block;
  flex: none;
  width: 0;
  border: 2px solid transparent;
  border-top: 3px solid #777;
  border-bottom: 0;
  margin-left: 4px;
  vertical-align: middle;
}
.car.far { margin-left: 9px; }
.car.lite { border-top-color: #bbb; }
.car.up { border-top: 0; border-bottom: 3px solid #bbb; }
.car.bar { position: relative; }
.car.bar::before { content: ""; position: absolute; left: -2px; top: -5px; width: 4px; height: 1px; background: #777; }

.app { display: flex; flex-direction: column; height: 100vh; }
.top { position: relative; flex: none; }
.doodles { position: absolute; right: 0; top: 0; width: 420px; height: 46px; }
.titlebar, .tabrow { position: relative; display: flex; align-items: center; }
.titlebar { height: 28px; }
.doctitle { width: 623px; margin: 0; padding-left: 10px; padding-bottom: 2px; text-align: center; font-size: 10px; font-weight: 400; }
.context { width: 52px; height: 28px; padding-top: 3px; border-top: 3px solid #ff9c00; background: #fff6e9; color: #c8602a; text-align: center; white-space: nowrap; }
.window { flex: 1; display: flex; align-items: center; justify-content: flex-end; height: 26px; }
.window button { width: 38px; display: flex; justify-content: center; }
.window svg { width: 12px; height: 12px; }
.window .signin { width: 52px; height: 16px; margin-right: 6px; background: #262626; color: #fff; line-height: 15px; }
.tabrow { height: 26px; border-bottom: 1px solid #dcdcdc; }
.tabs { display: grid; grid-template-columns: 49px 43px 37px 38px 49px 72px 68px 71px 38px 38px 38px 38px 44px 52px; height: 26px; align-self: flex-start; }
.tabs a { display: flex; align-items: center; justify-content: center; height: 25px; }
.tabs .file { background: #b7472a; color: #fff; }
.tabs .active { height: 26px; margin-left: 2px; background: #fff; border: 1px solid #dcdcdc; border-bottom: 0; color: #c2492d; }
.tabs .format { background: #fff6e9; }
.tell { display: flex; align-items: center; margin-left: 9px; gap: 3px; font-size: 9px; }
.tell svg { width: 11px; height: 15px; }
.share { display: flex; align-items: center; gap: 2px; margin-left: auto; margin-right: 16px; color: #c2492d; }
.share svg { width: 13px; height: 13px; }

.ribbon { display: flex; height: 76px; flex: none; border-bottom: 1px solid #d5d5d5; padding-top: 2px; }
.group { display: flex; flex-direction: column; height: 73px; border-right: 1px solid #e2e2e2; flex: none; }
.content { display: flex; flex: none; height: 59px; }
.content > * { flex: none; }
.caption { position: relative; text-align: center; height: 14px; padding-right: 12px; }
.launch { position: absolute; right: 2px; top: 3px; width: 9px; height: 9px; opacity: .7; }
.launch.dark { filter: brightness(.6); opacity: 1; }
.clip { width: 155px; }
.slides { width: 111px; }
.font { width: 201px; }
.para { width: 236px; }
.draw { width: 296px; }
.edit { width: 56px; }
.slides .caption { padding-right: 2px; }
.edit .caption { padding-right: 0; }
.big { display: flex; flex-direction: column; align-items: center; width: 42px; font-size: 9px; line-height: 13px; padding-top: 2px; }
.big svg { width: 26px; height: 28px; margin-bottom: 1px; }
.big > .car { margin: 5px 0 0; }
.big span .car { margin-left: 3px; }
.list { display: flex; flex-direction: column; }
.list button { display: flex; align-items: center; height: 19px; gap: 1px; text-align: left; }
.list button .car { margin-left: 3px; }
.list button .car.far { margin-left: 7px; }
.list svg { width: 14px; height: 14px; }
.clip .list, .slides .list { font-size: 9px; }
.slides .big { width: 43px; }
.off, .dis { color: #aaa; }
.off .car, .dis .car { border-top-color: #bbb; }

.rows { display: flex; flex-direction: column; gap: 6px; padding: 7px 0 0 2px; }
.tools { display: flex; align-items: center; height: 19px; color: #999; font-size: 11px; flex: none; }
.tools .car { border-top-color: #bbb; }
.t { width: 17px; display: flex; justify-content: center; }
.t svg, .split svg { width: 14px; height: 14px; }
.split { display: flex; align-items: center; width: 26px; padding-left: 2px; }
.split .car { margin-left: 3px; }
.tools em { font-family: "Liberation Serif", serif; font-weight: 700; font-size: 12px; }
.shade { text-shadow: 1px 1px 1px #ccc; }
.tools .small, .small { font-size: 9px; color: #999; }
.under { text-decoration: underline; }
.mark { color: #aaa; }
.tools .mark, .mark { font-size: 10px; line-height: 12px; }
.mark span { border-bottom: 3px solid #e6dce4; padding-right: 2px; font-style: italic; }
.sep { width: 1px; height: 17px; background: #e6e6e6; margin: 0 3px; }
.combo { position: relative; display: block; height: 18px; font-size: 11px; }
.combo select { width: 100%; height: 100%; appearance: none; border: 1px solid #e0e0e0; color: #a0a0a0; padding-left: 2px; }
.combo .car { position: absolute; right: 4px; top: 8px; border-top-color: #bbb; }
.combo.wide { width: 97px; }
.combo.size { width: 42px; margin-left: -1px; }
.para .content > .rows { width: 128px; }

.gallery { display: flex; width: 119px; height: 53px; margin: 2px 0 0 2px; border: 1px solid #c6c6c6; }
.shapes { flex: 1; display: grid; grid-template-columns: repeat(6, 1fr); grid-template-rows: repeat(3, 1fr); place-items: center; }
.shapes svg { width: 16px; height: 16px; }
.more { width: 12px; display: grid; border-left: 1px solid #d5d5d5; }
.more button { display: flex; align-items: center; justify-content: center; }
.more button + button { border-top: 1px solid #d5d5d5; }
.more .car { margin: 0; }
.arrangebtn { width: 36px; font-size: 10px; }
.quick { width: 38px; }
.draw .list button, .edit .list button { height: 18px; }
.draw .list, .edit .list { padding-top: 1px; }
.edit .list { margin-left: 3px; }
.replace { display: grid; width: 14px; font-size: 7px; line-height: 7px; color: #3d7fc1; }
.replace b { font-weight: 600; }
.replace b:first-child { color: #8a4f9e; }
.collapse { margin-left: auto; margin-right: 6px; align-self: flex-end; padding-bottom: 3px; }
.collapse svg { width: 10px; height: 8px; }

.quickbar {
  display: grid;
  flex: none;
  height: 29px;
  align-items: center;
  grid-template-columns: 26px 24px 25px 24px 25px 24px 25px 25px 25px 25px 24px 31px 28px 24px 25px 25px 80px 48px 25px 25px 25px 25px 24px 25px 24px 25px 25px 24px 25px 24px 24px 29px 24px 25px 24px 25px 30px 29px 25px 24px 27px 25px 24px;
}
.quickbar button { display: flex; align-items: center; justify-content: center; }
.quickbar svg { width: 15px; height: 15px; }
.quickbar .combo { margin: 0 3px; }
.quickbar .script { font-weight: 700; font-size: 12px; }
.script sup, .script sub { color: #3d7fc1; font-size: 7px; line-height: 7px; }
.script sup { align-self: flex-start; }
.script sub { align-self: flex-end; }

.work { flex: 1; display: flex; min-height: 0; }
.thumbs { width: 208px; flex: none; border-right: 1px solid #d8d8d8; padding: 13px 0 0 7px; display: flex; flex-direction: column; gap: 11px; }
.item { display: flex; align-items: flex-start; height: 95px; }
.num { width: 14px; margin-right: 7px; text-align: center; font-size: 13px; line-height: 16px; color: #555; }
.num svg { width: 10px; height: 10px; margin-left: 2px; margin-top: -1px; }
.frame { width: 162px; padding: 2px; }
.frame > svg { width: 158px; height: 90px; border: 1px solid #d5d5d5; }
.current .num { color: #d9523a; }
.current .frame { background: #fff; outline: 2px solid #f4714f; outline-offset: -2px; padding: 3px; }
.current .frame > svg { width: 156px; height: 88px; border: 0; }
.stagewrap { flex: 1; min-width: 0; display: grid; grid-template-columns: minmax(0, 1fr) 14px; grid-template-rows: minmax(0, 1fr) 16px; }
.stage { width: 100%; height: 100%; }
.alt { fill: #fb6849; font: 600 68px "Open Sans", sans-serif; }
.axis { fill: #fdc7ab; font-family: Lato, sans-serif; }
.vscroll, .hscroll { display: flex; background: #f3f3f3; }
.vscroll { flex-direction: column; padding-top: 1px; }
.track { flex: 1; display: flex; }
.thumb { background: #fff; border: 1px solid #c8c8c8; }
.vscroll .track { flex-direction: column; }
.vscroll .thumb { height: 40px; margin-top: 238px; }
.hscroll { height: 14px; padding-top: 1px; }
.hscroll .thumb { width: 379px; margin-left: 18px; }
.vscroll button, .hscroll button { width: 14px; height: 13px; background: #fff; border: 1px solid #ddd; display: flex; align-items: center; justify-content: center; }
.vscroll .plain { border: 0; width: 14px; height: 15px; flex-direction: column; background: #fff; }
.tri { width: 0; border: 3px solid transparent; border-top: 4px solid #666; border-bottom: 0; }
.tri.up { border-top: 0; border-bottom: 4px solid #666; }
.tri.lt { border: 3px solid transparent; border-right: 4px solid #666; border-left: 0; }
.tri.rt { border: 3px solid transparent; border-left: 4px solid #666; border-right: 0; }
```
